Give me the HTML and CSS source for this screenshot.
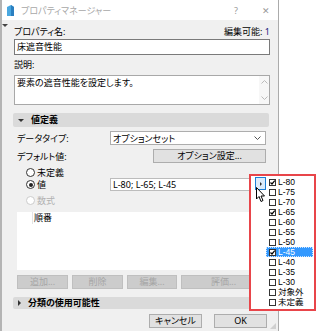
FILE: index.html
```html
<!DOCTYPE html>
<html lang="ja">
<head>
  <meta charset="UTF-8">
  <title>プロパティマネージャー</title>
  <link rel="stylesheet" href="styles.css">
</head>
<body>
  <div class="window">
    <div class="titlebar">
      <svg class="app-icon" width="9" height="13" viewBox="0 0 9 13">
        <path d="M1 12 L1 3 L5 1 L8 3 L8 12 Z" fill="#4aa8e0"/>
        <path d="M5 1 L5 12 L8 12 L8 3 Z" fill="#2b7fc0"/>
      </svg>
      <span class="title">プロパティマネージャー</span>
      <span class="tb-btn help">?</span>
      <span class="tb-btn close">✕</span>
    </div>

    <span class="grip-mark"></span>

    <div class="content">
      <div class="head-row">
        <span>プロパティ名:</span>
        <span>編集可能: <b class="num">1</b></span>
      </div>
      <div class="field name">床遮音性能</div>

      <div class="label">説明:</div>
      <div class="field memo">
        <span class="memo-text">要素の遮音性能を設定します。</span>
        <span class="scroll">
          <svg width="7" height="4" viewBox="0 0 7 4"><path d="M0.5 3.5 L3.5 0.5 L6.5 3.5" fill="none" stroke="#bbb"/></svg>
          <svg width="7" height="4" viewBox="0 0 7 4"><path d="M0.5 0.5 L3.5 3.5 L6.5 0.5" fill="none" stroke="#bbb"/></svg>
        </span>
      </div>

      <div class="section"><span class="tri down"></span>値定義</div>

      <div class="group">
        <div class="row r-type">
          <span>データタイプ:</span>
          <div class="select">
            <span>オプションセット</span>
            <svg width="7" height="4" viewBox="0 0 7 4"><path d="M0.5 0.5 L3.5 3.5 L6.5 0.5" fill="none" stroke="#555"/></svg>
          </div>
        </div>
        <div class="row r-default">
          <span>デフォルト値:</span>
          <div class="btn opt">オプション設定...</div>
        </div>

        <div class="radio-row r1"><span class="radio"></span>未定義</div>
        <div class="radio-row r2">
          <span class="radio on"></span>値
          <div class="field value">L-80; L-65; L-45</div>
        </div>
        <div class="radio-row r3 disabled"><span class="radio"></span>数式</div>

        <div class="list">
          <div class="list-head">
            <span class="col-a"></span>
            <span class="col-b">順番</span>
          </div>
          <span class="scroll list-scroll">
            <svg width="7" height="4" viewBox="0 0 7 4"><path d="M0.5 3.5 L3.5 0.5 L6.5 3.5" fill="none" stroke="#bbb"/></svg>
            <svg width="7" height="4" viewBox="0 0 7 4"><path d="M0.5 0.5 L3.5 3.5 L6.5 0.5" fill="none" stroke="#bbb"/></svg>
          </span>
        </div>

        <div class="btn-row">
          <div class="btn off b-add">追加...</div>
          <div class="btn off b-del">削除</div>
          <div class="btn off b-edit">編集...</div>
          <div class="btn off b-eval">評価...</div>
        </div>
      </div>

      <div class="section s2"><span class="tri right"></span>分類の使用可能性</div>

      <div class="footer">
        <div class="btn foot">キャンセル</div>
        <div class="btn foot">OK</div>
      </div>
    </div>

    <span class="resize"></span>
  </div>

  <div class="popup">
    <div class="pop-side">
      <div class="drop-btn"><span class="tri right small"></span></div>
    </div>
    <ul class="options">
      <li class="on">L-80</li>
      <li>L-75</li>
      <li>L-70</li>
      <li class="on">L-65</li>
      <li>L-60</li>
      <li>L-55</li>
      <li>L-50</li>
      <li class="on sel">L-45</li>
      <li>L-40</li>
      <li>L-35</li>
      <li>L-30</li>
      <li>対象外</li>
      <li>未定義</li>
    </ul>
  </div>

  <svg class="cursor" width="10" height="16" viewBox="0 0 10 16">
    <path d="M0.5 0.5 L0.5 12 L3 9.5 L5 14.5 L7 13.5 L5 9 L8.5 9 Z" fill="#fff" stroke="#000" stroke-width="1"/>
  </svg>
</body>
</html>
```

FILE: styles.css
```css
body {
  margin: 0;
  width: 316px;
  height: 331px;
  background: #fff;
  font-family: "Noto Sans", "Noto Sans CJK JP", sans-serif;
  font-size: 9px;
  font-feature-settings: "palt";
  color: #000;
  position: relative;
  overflow: hidden;
}

.window {
  position: relative;
  width: 279px;
  height: 331px;
  box-sizing: border-box;
  background: #f0f0f0;
  border-left: 2px solid #b4b4b4;
  border-right: 1px solid #ababab;
}

.titlebar {
  height: 20px;
  background: #fff;
  display: flex;
  align-items: center;
}

.app-icon {
  margin-left: 4px;
}

.title {
  margin-left: 6px;
  color: #a8a8a8;
  font-size: 9px;
  flex: 1;
}

.tb-btn {
  color: #999;
  font-size: 9px;
}

.help {
  margin-right: 24px;
}

.close {
  margin-right: 8px;
}

.grip-mark {
  position: absolute;
  left: 0;
  top: 24px;
  border-left: 3px solid transparent;
  border-right: 3px solid transparent;
  border-top: 3px solid #444;
}

.content {
  padding: 0 8px 0 12px;
}

.head-row {
  margin-top: 6px;
  height: 12px;
  line-height: 12px;
  display: flex;
  justify-content: space-between;
}

.num {
  font-weight: normal;
  color: #1a237e;
}

.field {
  background: #fff;
  border: 1px solid #7a7a7a;
  box-sizing: border-box;
  padding-left: 2px;
}

.name {
  margin-top: 1px;
  height: 16px;
  line-height: 14px;
}

.label {
  margin-top: 4px;
  height: 12px;
  line-height: 12px;
}

.memo {
  margin-top: 4px;
  height: 30px;
  display: flex;
  justify-content: space-between;
  border-color: #a8a8a8;
}

.memo-text {
  line-height: 14px;
}

.scroll {
  width: 10px;
  display: flex;
  flex-direction: column;
  justify-content: space-between;
  align-items: center;
  padding: 4px 0;
  box-sizing: border-box;
  background: #f7f7f7;
}

.section {
  margin-top: 8px;
  margin-left: -1px;
  width: 256px;
  height: 14px;
  line-height: 14px;
  background: #dadada;
  border-radius: 2px;
  font-weight: bold;
  display: flex;
  align-items: center;
}

.tri {
  display: inline-block;
  margin: 0 7px 0 5px;
}

.tri.down {
  border-left: 3px solid transparent;
  border-right: 3px solid transparent;
  border-top: 3px solid #333;
}

.tri.right {
  border-top: 3px solid transparent;
  border-bottom: 3px solid transparent;
  border-left: 3px solid #333;
}

.group {
  padding: 0 4px 0 3px;
}

.row {
  height: 14px;
  display: flex;
  align-items: center;
  justify-content: space-between;
}

.r-type {
  margin-top: 4px;
}

.r-default {
  margin-top: 4px;
}

.select {
  width: 156px;
  height: 14px;
  box-sizing: border-box;
  background: #fff;
  border: 1px solid #adadad;
  display: flex;
  align-items: center;
  justify-content: space-between;
  padding: 0 4px 0 2px;
}

.btn {
  box-sizing: border-box;
  background: #e1e1e1;
  border: 1px solid #adadad;
  text-align: center;
  height: 14px;
  line-height: 12px;
}

.opt {
  width: 113px;
}

.radio-row {
  height: 12px;
  display: flex;
  align-items: center;
  padding-left: 9px;
}

.r1 {
  margin-top: 3px;
}

.r2 {
  height: 13px;
}

.r3 {
  margin-top: 3px;
}

.radio {
  width: 9px;
  height: 9px;
  box-sizing: border-box;
  border: 1px solid #333;
  border-radius: 50%;
  background: #fff;
  margin-right: 2px;
  position: relative;
}

.radio.on::after {
  content: "";
  position: absolute;
  left: 1.5px;
  top: 1.5px;
  width: 4px;
  height: 4px;
  border-radius: 50%;
  background: #222;
}

.disabled {
  color: #b0b0b0;
}

.disabled .radio {
  border-color: #ccc;
}

.value {
  margin-left: auto;
  width: 156px;
  height: 13px;
  line-height: 11px;
  border-color: #bcbcbc;
}

.list {
  margin-top: 6px;
  height: 58px;
  background: #fff;
  display: flex;
  justify-content: space-between;
}

.list-head {
  display: flex;
  height: 12px;
  line-height: 12px;
  flex: 1;
}

.col-a {
  width: 15px;
  border-right: 1px solid #e4e4e4;
}

.col-b {
  padding-left: 1px;
  flex: 1;
  border-right: 1px solid #e4e4e4;
  margin-right: 6px;
}

.list-scroll {
  background: #fff;
  padding: 14px 0 4px;
}

.btn-row {
  margin-top: 5px;
  display: flex;
  gap: 4px;
}

.btn.off {
  color: #a6a6a6;
  background: #cccccc;
  border-color: #bfbfbf;
}

.b-add { width: 51px; }
.b-del { width: 51px; }
.b-edit { width: 50px; }
.b-eval { flex: 1; }

.s2 {
  margin-top: 8px;
  height: 12px;
  line-height: 12px;
}

.footer {
  margin-top: 5px;
  padding-right: 3px;
  display: flex;
  justify-content: flex-end;
  gap: 12px;
}

.foot {
  width: 53px;
}

.resize {
  position: absolute;
  right: 2px;
  bottom: 2px;
  width: 6px;
  height: 6px;
  background: radial-gradient(circle, #aaa 0.6px, transparent 0.8px) 0 0 / 2px 2px;
  clip-path: polygon(100% 0, 100% 100%, 0 100%);
}

.popup {
  position: absolute;
  left: 249px;
  top: 174px;
  width: 67px;
  height: 137px;
  box-sizing: border-box;
  border: 2px solid #e8454a;
  background: #fff;
  display: flex;
}

.pop-side {
  width: 15px;
  padding: 1px 0 0 4px;
  box-sizing: border-box;
}

.drop-btn {
  width: 11px;
  height: 13px;
  box-sizing: border-box;
  border: 1px solid #1c7fd6;
  background: #dcecfb;
  display: flex;
  align-items: center;
  justify-content: center;
}

.tri.small {
  margin: 0;
  border-top-width: 2px;
  border-bottom-width: 2px;
  border-left-width: 2px;
}

.options {
  list-style: none;
  margin: 1px 0 0;
  padding: 0;
  width: 47px;
  font-family: "Liberation Sans", "Noto Sans CJK JP", sans-serif;
  font-size: 8.5px;
}

.options li {
  height: 10px;
  line-height: 10px;
  padding-left: 3px;
  display: flex;
  align-items: center;
  box-sizing: border-box;
  overflow: hidden;
}

.options li::before {
  content: "";
  width: 7px;
  height: 7px;
  box-sizing: border-box;
  border: 1px solid #333;
  background: #fff;
  margin-right: 2px;
  flex: none;
}

.options li.on::before {
  background: #fff url("data:image/svg+xml;utf8,<svg xmlns='http://www.w3.org/2000/svg' width='5' height='5' viewBox='0 0 5 5'><path d='M0.5 2.5 L2 4 L4.8 0.6' fill='none' stroke='%23000' stroke-width='1.2'/></svg>") center / 5px 5px no-repeat;
}

.options li.sel {
  background: #3399ff;
  color: #fff;
  outline: 1px dotted #cfe6ff;
  outline-offset: -1px;
}

.cursor {
  position: absolute;
  left: 256px;
  top: 187px;
}
```
